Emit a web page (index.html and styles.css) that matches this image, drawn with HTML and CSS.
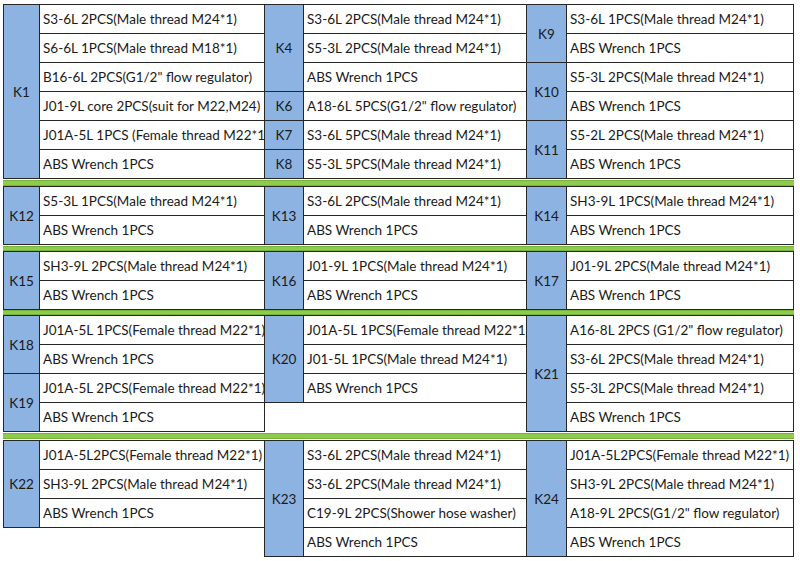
FILE: index.html
```html
<!DOCTYPE html>
<html>
<head>
<meta charset="utf-8">
<link rel="stylesheet" href="styles.css">
</head>
<body>
<div class="sheet">

  <div class="section">
    <div class="group g1">
      <div class="block">
        <div class="label">K1</div>
        <div class="items">
          <div class="item">S3-6L 2PCS(Male thread M24*1)</div>
          <div class="item">S6-6L 1PCS(Male thread M18*1)</div>
          <div class="item">B16-6L 2PCS(G1/2" flow regulator)</div>
          <div class="item">J01-9L core 2PCS(suit for M22,M24)</div>
          <div class="item">J01A-5L 1PCS (Female thread M22*1)</div>
          <div class="item">ABS Wrench 1PCS</div>
        </div>
      </div>
    </div>
    <div class="group g2">
      <div class="block">
        <div class="label">K4</div>
        <div class="items">
          <div class="item">S3-6L 2PCS(Male thread M24*1)</div>
          <div class="item">S5-3L 2PCS(Male thread M24*1)</div>
          <div class="item">ABS Wrench 1PCS</div>
        </div>
      </div>
      <div class="block">
        <div class="label">K6</div>
        <div class="items">
          <div class="item">A18-6L 5PCS(G1/2" flow regulator)</div>
        </div>
      </div>
      <div class="block">
        <div class="label">K7</div>
        <div class="items">
          <div class="item">S3-6L 5PCS(Male thread M24*1)</div>
        </div>
      </div>
      <div class="block">
        <div class="label">K8</div>
        <div class="items">
          <div class="item">S5-3L 5PCS(Male thread M24*1)</div>
        </div>
      </div>
    </div>
    <div class="group g3">
      <div class="block">
        <div class="label">K9</div>
        <div class="items">
          <div class="item">S3-6L 1PCS(Male thread M24*1)</div>
          <div class="item">ABS Wrench 1PCS</div>
        </div>
      </div>
      <div class="block">
        <div class="label">K10</div>
        <div class="items">
          <div class="item">S5-3L 2PCS(Male thread M24*1)</div>
          <div class="item">ABS Wrench 1PCS</div>
        </div>
      </div>
      <div class="block">
        <div class="label">K11</div>
        <div class="items">
          <div class="item">S5-2L 2PCS(Male thread M24*1)</div>
          <div class="item">ABS Wrench 1PCS</div>
        </div>
      </div>
    </div>
  </div>

  <div class="divider d1"></div>

  <div class="section">
    <div class="group g1">
      <div class="block">
        <div class="label">K12</div>
        <div class="items">
          <div class="item">S5-3L 1PCS(Male thread M24*1)</div>
          <div class="item">ABS Wrench 1PCS</div>
        </div>
      </div>
    </div>
    <div class="group g2">
      <div class="block">
        <div class="label">K13</div>
        <div class="items">
          <div class="item">S3-6L 2PCS(Male thread M24*1)</div>
          <div class="item">ABS Wrench 1PCS</div>
        </div>
      </div>
    </div>
    <div class="group g3">
      <div class="block">
        <div class="label">K14</div>
        <div class="items">
          <div class="item">SH3-9L 1PCS(Male thread M24*1)</div>
          <div class="item">ABS Wrench 1PCS</div>
        </div>
      </div>
    </div>
  </div>

  <div class="divider d2"></div>

  <div class="section">
    <div class="group g1">
      <div class="block">
        <div class="label">K15</div>
        <div class="items">
          <div class="item">SH3-9L 2PCS(Male thread M24*1)</div>
          <div class="item">ABS Wrench 1PCS</div>
        </div>
      </div>
    </div>
    <div class="group g2">
      <div class="block">
        <div class="label">K16</div>
        <div class="items">
          <div class="item">J01-9L 1PCS(Male thread M24*1)</div>
          <div class="item">ABS Wrench 1PCS</div>
        </div>
      </div>
    </div>
    <div class="group g3">
      <div class="block">
        <div class="label">K17</div>
        <div class="items">
          <div class="item">J01-9L 2PCS(Male thread M24*1)</div>
          <div class="item">ABS Wrench 1PCS</div>
        </div>
      </div>
    </div>
  </div>

  <div class="divider d3"></div>

  <div class="section">
    <div class="group g1">
      <div class="block">
        <div class="label">K18</div>
        <div class="items">
          <div class="item">J01A-5L 1PCS(Female thread M22*1)</div>
          <div class="item">ABS Wrench 1PCS</div>
        </div>
      </div>
      <div class="block">
        <div class="label">K19</div>
        <div class="items">
          <div class="item">J01A-5L 2PCS(Female thread M22*1)</div>
          <div class="item">ABS Wrench 1PCS</div>
        </div>
      </div>
    </div>
    <div class="group g2">
      <div class="block">
        <div class="label">K20</div>
        <div class="items">
          <div class="item">J01A-5L 1PCS(Female thread M22*1)</div>
          <div class="item">J01-5L 1PCS(Male thread M24*1)</div>
          <div class="item">ABS Wrench 1PCS</div>
        </div>
      </div>
      <div class="filler"></div>
    </div>
    <div class="group g3">
      <div class="block">
        <div class="label">K21</div>
        <div class="items">
          <div class="item">A16-8L 2PCS (G1/2" flow regulator)</div>
          <div class="item">S3-6L 2PCS(Male thread M24*1)</div>
          <div class="item">S5-3L 2PCS(Male thread M24*1)</div>
          <div class="item">ABS Wrench 1PCS</div>
        </div>
      </div>
    </div>
  </div>

  <div class="divider d4"></div>

  <div class="section">
    <div class="group g1">
      <div class="block">
        <div class="label">K22</div>
        <div class="items">
          <div class="item">J01A-5L2PCS(Female thread M22*1)</div>
          <div class="item">SH3-9L 2PCS(Male thread M24*1)</div>
          <div class="item">ABS Wrench 1PCS</div>
        </div>
      </div>
      <div class="filler"></div>
    </div>
    <div class="group g2">
      <div class="block">
        <div class="label">K23</div>
        <div class="items">
          <div class="item">S3-6L 2PCS(Male thread M24*1)</div>
          <div class="item">S3-6L 2PCS(Male thread M24*1)</div>
          <div class="item">C19-9L 2PCS(Shower hose washer)</div>
          <div class="item">ABS Wrench 1PCS</div>
        </div>
      </div>
    </div>
    <div class="group g3">
      <div class="block">
        <div class="label">K24</div>
        <div class="items">
          <div class="item">J01A-5L2PCS(Female thread M22*1)</div>
          <div class="item">SH3-9L 2PCS(Male thread M24*1)</div>
          <div class="item">A18-9L 2PCS(G1/2" flow regulator)</div>
          <div class="item">ABS Wrench 1PCS</div>
        </div>
      </div>
    </div>
  </div>

</div>
</body>
</html>
```

FILE: styles.css
```css
* {
  box-sizing: border-box;
}

html, body {
  margin: 0;
  padding: 0;
  background: #ffffff;
}

body {
  font-family: Lato, "Open Sans", sans-serif;
  font-size: 13.5px;
  color: #1a1a1a;
}

.sheet {
  padding: 4px 0 0 3px;
  width: 800px;
}

.section {
  display: flex;
  align-items: stretch;
}

.group {
  display: flex;
  flex-direction: column;
}

.group + .group {
  margin-left: -1px;
}

.g1 { width: 262px; }
.g2 { width: 263px; }
.g3 { width: 268px; }

.block {
  display: flex;
  align-items: stretch;
}

.block + .block {
  margin-top: -1px;
}

.label {
  flex: none;
  display: flex;
  align-items: center;
  justify-content: center;
  background: #8db3e2;
  border: 1px solid #262626;
}

.g1 .label { width: 37px; }
.g2 .label { width: 40px; }
.g3 .label { width: 41px; }

.items {
  flex: 1;
  display: flex;
  flex-direction: column;
  margin-left: -1px;
  min-width: 0;
}

.item {
  height: 30px;
  border: 1px solid #262626;
  background: #ffffff;
  padding: 0 0 0 3px;
  display: flex;
  align-items: center;
  white-space: nowrap;
  overflow: hidden;
}

.item + .item {
  margin-top: -1px;
}

.filler {
  flex: 1;
}

.divider {
  width: 791px;
  background: #8fcb4c;
  border-top: 1px solid #77b23a;
  border-bottom: 1px solid #77b23a;
}

.d1 { height: 6px; margin: 1px 0 0; }
.d2 { height: 5px; margin: 1px 0 0; }
.d3 { height: 5px; margin: 0; }
.d4 { height: 6px; margin: 1px 0 1px; }
```
